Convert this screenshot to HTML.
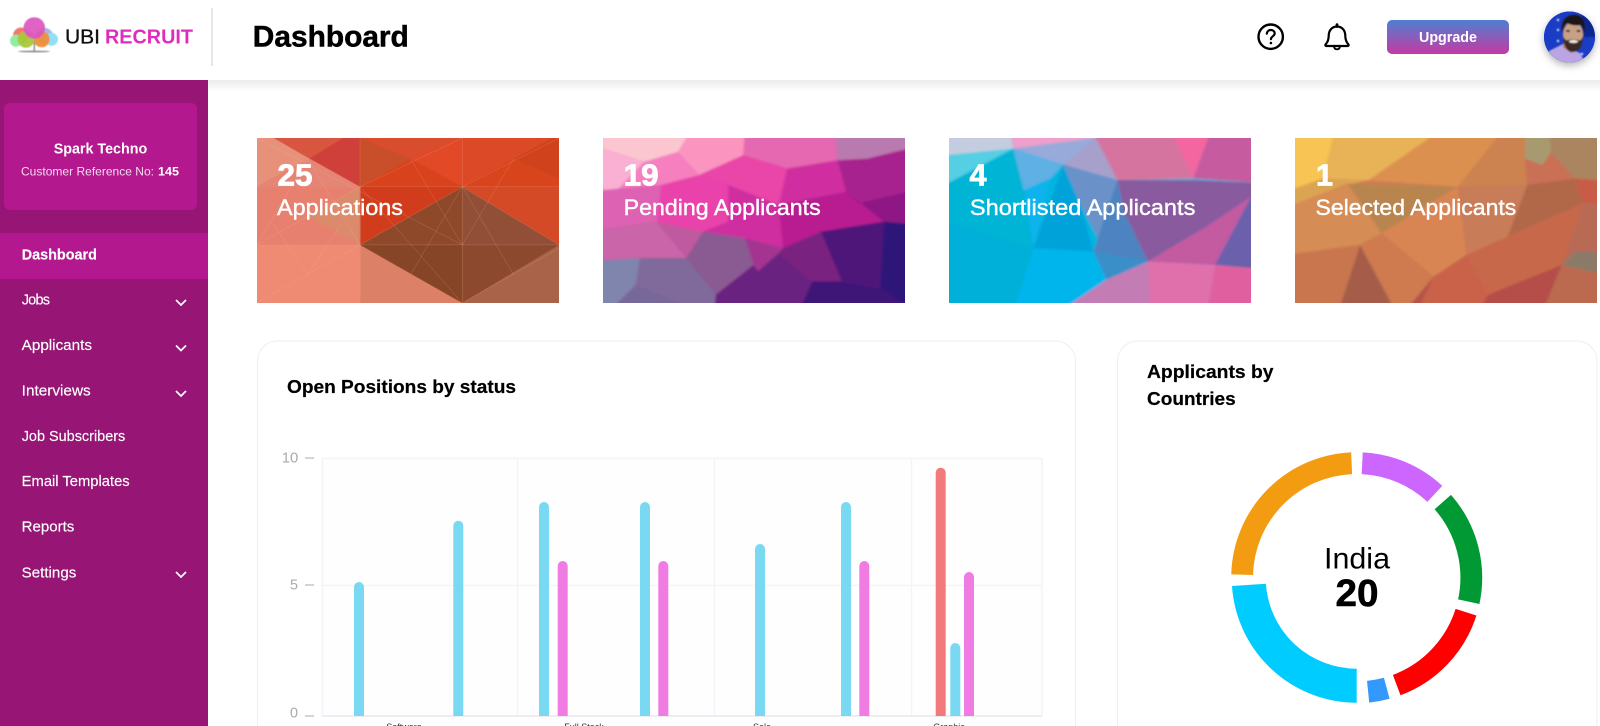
<!DOCTYPE html>
<html lang="en">
<head>
<meta charset="utf-8">
<title>Dashboard</title>
<style>
html,body{margin:0;padding:0;width:1600px;height:726px;overflow:hidden;background:#fff}
svg{display:block}
text{font-family:"Liberation Sans",sans-serif}
.m{fill:#fff;font-size:14.5px;stroke:#fff;stroke-width:.15px}
.cn{fill:#fff;font-size:31px;font-weight:700;stroke:#fff;stroke-width:.8px}
.cl{fill:#fff;font-size:22px;stroke:#fff;stroke-width:.4px}
.t{fill:#000;font-size:18px;font-weight:700;stroke:#000;stroke-width:.2px}
.y{fill:#aaa;font-size:15px}
.x{fill:#333;font-size:9px}
</style>
</head>
<body>
<svg width="1600" height="726" viewBox="0 0 1600 726" xmlns="http://www.w3.org/2000/svg">
<defs>
<linearGradient id="up" x1="0" y1="0" x2="0" y2="1"><stop offset="0" stop-color="#4f7fd0"/><stop offset="1" stop-color="#c53aa3"/></linearGradient>
<linearGradient id="hs" x1="0" y1="0" x2="0" y2="1"><stop offset="0" stop-color="#ececec"/><stop offset="1" stop-color="#fff"/></linearGradient>
<filter id="b" x="-10%" y="-10%" width="120%" height="120%"><feGaussianBlur stdDeviation=".8"/></filter>
<filter id="l" x="-10%" y="-10%" width="120%" height="120%"><feGaussianBlur stdDeviation=".45"/></filter>
<filter id="p" x="-5%" y="-5%" width="110%" height="110%"><feGaussianBlur stdDeviation="3"/></filter>
<filter id="p1" x="-5%" y="-5%" width="110%" height="110%"><feGaussianBlur stdDeviation="1"/></filter>
<filter id="s" x="-30%" y="-30%" width="160%" height="170%"><feDropShadow dx="0" dy="3" stdDeviation="4" flood-color="#000" flood-opacity=".3"/></filter>
<clipPath id="av"><circle cx="1569.5" cy="37" r="25.5"/></clipPath>
</defs>

<rect width="1600" height="726" fill="#fff"/>
<rect x="208" y="80" width="1392" height="12" fill="url(#hs)"/>

<!-- header -->
<rect x="211" y="8" width="2" height="58" fill="#e6e6e6"/>
<g filter="url(#l)">
<circle cx="21" cy="35.500" r="8" fill="#ef6a5e" opacity=".9"/>
<circle cx="45" cy="36" r="8" fill="#9fb8dd"/>
<circle cx="51.500" cy="39.300" r="6.500" fill="#8fe0f8"/>
<circle cx="16" cy="40.700" r="6" fill="#90eda0"/>
<circle cx="26" cy="39.300" r="8.500" fill="#a8c83a" opacity=".95"/>
<circle cx="41.700" cy="39.300" r="8" fill="#ee8f3a" opacity=".95"/>
<circle cx="34.300" cy="28" r="10.800" fill="#dd55bf" opacity=".93"/>
<rect x="33.600" y="42" width="1.400" height="9" fill="#8a8a8a"/>
<ellipse cx="34" cy="51.500" rx="16" ry="1" fill="#999"/>
</g>
<text x="65" y="43.300" font-size="20" fill="#111" stroke="#111" stroke-width=".3" textLength="35" lengthAdjust="spacingAndGlyphs">UBI</text>
<text x="105" y="43.300" font-size="20" font-weight="700" fill="#e02cbc" textLength="88" lengthAdjust="spacingAndGlyphs">RECRUIT</text>
<text x="252.800" y="46.300" font-size="30" font-weight="700" fill="#000" stroke="#000" stroke-width=".5" textLength="156" lengthAdjust="spacingAndGlyphs">Dashboard</text>

<circle cx="1270.700" cy="36.700" r="12.200" fill="none" stroke="#000" stroke-width="2.400"/>
<path d="M1266.800 33.600c.3-2.300 2-3.600 4-3.600 2.300 0 3.900 1.500 3.900 3.400 0 2.800-3.800 3-3.800 5.700" fill="none" stroke="#000" stroke-width="2.200" stroke-linecap="round"/>
<circle cx="1270.900" cy="43" r="1.300" fill="#000"/>
<path d="M1337 26.500c-5 0-8.300 3.900-8.300 9.300 0 4.200-1 6.400-3.100 8.700-.5.600-.2 1.500.7 1.500h21.400c.9 0 1.200-.9.7-1.500-2.100-2.300-3.100-4.500-3.100-8.700 0-5.400-3.300-9.300-8.300-9.300z" fill="none" stroke="#000" stroke-width="2.200" stroke-linejoin="round"/>
<path d="M1337 26.500v-1.800" stroke="#000" stroke-width="2.800" stroke-linecap="round"/>
<path d="M1334 46.500c.3 1.900 1.500 2.800 3 2.800s2.700-.9 3-2.800" fill="none" stroke="#000" stroke-width="1.900"/>

<rect x="1387" y="20" width="122" height="34" rx="5" fill="url(#up)"/>
<text x="1448" y="42" font-size="15" font-weight="700" fill="#fff" text-anchor="middle" textLength="58" lengthAdjust="spacingAndGlyphs">Upgrade</text>

<circle cx="1569.500" cy="37" r="25.500" fill="#1b3cc4" filter="url(#s)"/>
<g clip-path="url(#av)">
<rect x="1544" y="11" width="51" height="52" fill="#1b3cc4"/>
<g filter="url(#b)">
<rect x="1582" y="11" width="13" height="26" fill="#10288f"/>
<circle cx="1558" cy="20" r="1.200" fill="#cfe4ff"/>
<circle cx="1558" cy="30" r="1.200" fill="#cfe4ff"/>
<circle cx="1558" cy="41" r="1.200" fill="#cfe4ff"/>
<circle cx="1582" cy="54" r="1.200" fill="#cfe4ff"/>
<path d="M1546 64l3-13 14-7 9 6 8 3 6 11z" fill="#bba4e4"/>
<path d="M1564 42l-1 5 8 6 6-3 1-8z" fill="#a9795f"/>
<ellipse cx="1573" cy="35" rx="10" ry="13.500" fill="#c9a084"/>
<path d="M1562 33c-1.500-10 2-17 10.500-18 8.500-1 13 4.500 12.500 13.500l-1 4.500c-.5-3-1.500-6-3-8-5 1-10.500 0-14.500-2-1.500 3-3.500 6-4.500 10z" fill="#1e1714"/>
<path d="M1563.500 36c0 9 3 16 9.500 16s9.500-7 10-16c-1 3-2 4-3.500 4.500-4-1.500-9-1.500-12.500 0-1.500-.5-3-2-3.500-4.500z" fill="#3a2a22"/>
<ellipse cx="1573.500" cy="41.500" rx="4.500" ry="1.500" fill="#f2ece8"/>
<ellipse cx="1568" cy="31" rx="2" ry="1" fill="#231815"/>
<ellipse cx="1578.500" cy="31" rx="2" ry="1" fill="#231815"/>
</g>
</g>

<!-- sidebar -->
<rect x="0" y="80" width="208" height="646" fill="#961575"/>
<rect x="4" y="103" width="193" height="107" rx="6" fill="#b3188f"/>
<text x="53.700" y="153.300" font-size="14.500" font-weight="700" fill="#fff" textLength="93.500" lengthAdjust="spacingAndGlyphs">Spark Techno</text>
<text x="21" y="175.700" font-size="12" fill="#f3dcee" textLength="133" lengthAdjust="spacingAndGlyphs">Customer Reference No:</text>
<text x="158" y="175.700" font-size="12" font-weight="700" fill="#fff" textLength="21" lengthAdjust="spacingAndGlyphs">145</text>
<rect x="0" y="233" width="208" height="46" fill="#b3188f"/>
<text class="m" x="21.700" y="259.300" font-weight="700" textLength="75.300" lengthAdjust="spacingAndGlyphs">Dashboard</text>
<text class="m" x="21.700" y="304.300" textLength="28.300" lengthAdjust="spacing">Jobs</text>
<text class="m" x="21.700" y="350" textLength="70.300" lengthAdjust="spacingAndGlyphs">Applicants</text>
<text class="m" x="21.700" y="395.300" textLength="69" lengthAdjust="spacingAndGlyphs">Interviews</text>
<text class="m" x="21.700" y="441" textLength="103.600" lengthAdjust="spacingAndGlyphs">Job Subscribers</text>
<text class="m" x="21.700" y="486" textLength="108" lengthAdjust="spacingAndGlyphs">Email Templates</text>
<text class="m" x="21.700" y="531.700" textLength="52.600" lengthAdjust="spacingAndGlyphs">Reports</text>
<text class="m" x="21.700" y="577.300" textLength="54.600" lengthAdjust="spacingAndGlyphs">Settings</text>
<g fill="none" stroke="#fff" stroke-width="1.700">
<path d="M176 300l5 5 5-5"/><path d="M176 345.500l5 5 5-5"/><path d="M176 391l5 5 5-5"/><path d="M176 572l5 5 5-5"/>
</g>

<!-- card 1 -->
<svg x="257" y="138" width="302" height="165" viewBox="40 38 718 497" preserveAspectRatio="none">
<rect x="40" y="38" width="718" height="497" fill="#d9472a"/>
<g filter="url(#p1)">
<polygon points="0,0 80,0 80,38 165,100 40,185 0,185" fill="#e8917a"/>
<polygon points="80,0 245,0 245,38 165,100 80,38" fill="#d8553f"/>
<polygon points="245,0 285,0 285,185 165,100 245,38" fill="#cf3f3a"/>
<polygon points="40,185 165,100 285,185" fill="#e58576"/>
<polygon points="0,185 285,185 285,360 0,360" fill="#e8806f"/>
<polygon points="285,185 285,360 160,275" fill="#dc8a6c"/>
<polygon points="0,360 285,360 285,580 0,580" fill="#ef8a73"/>
<polygon points="285,360 528,535 528,580 285,580" fill="#dc8068"/>
<polygon points="285,0 528,0 528,38 405,100 285,185" fill="#c94f2a"/>
<polygon points="285,0 528,0 528,38 405,100 285,38" fill="#d94d2e"/>
<polygon points="405,100 528,38 528,185" fill="#e24a28"/>
<polygon points="285,185 405,100 528,185" fill="#d8431f"/>
<polygon points="285,185 528,185 285,360" fill="#d13c1c"/>
<polygon points="528,0 800,0 800,38 650,100 528,185" fill="#dc4a28"/>
<polygon points="650,100 800,0 800,185 758,185" fill="#d0431f"/>
<polygon points="528,185 650,100 800,185" fill="#d8451f"/>
<polygon points="528,185 800,185 800,360 758,360" fill="#d44a25"/>
<polygon points="758,360 800,360 800,580 528,580 528,535" fill="#a9634a"/>
<polygon points="528,185 285,360 528,360" fill="#8e4a2c"/>
<polygon points="528,185 528,360 758,360" fill="#915038"/>
<polygon points="285,360 528,360 528,535" fill="#864528"/>
<polygon points="528,360 758,360 528,535" fill="#8d4a2e"/>
</g>
<g fill="none" stroke="#f4c0a0" stroke-width="1" opacity=".42">
<path d="M285 38V535M528 38V535M40 185H758M40 360H758M40 38L528 360M285 185L528 535M40 360L285 185 528 38M285 360L528 185 758 38M528 185L758 360M528 535L758 370M40 535L285 360M160 100L40 360M160 100L285 360M160 450L80 300M160 450L240 300M405 100L528 360M650 100L528 360M405 450L528 185M650 450L528 185"/>
</g>
</svg>

<!-- card 2 -->
<svg x="603" y="138" width="302" height="165" viewBox="862 38 718 497" preserveAspectRatio="none">
<rect x="862" y="38" width="718" height="497" fill="#b5308f"/>
<g filter="url(#p)">
<rect x="820" y="0" width="800" height="580" fill="#b5308f"/>
<polygon points="820,0 1060,0 1060,38 1040,80 960,110 862,70 820,70" fill="#fcc6d0"/>
<polygon points="820,70 862,70 960,110 900,190 870,200 820,200" fill="#f9b0d2"/>
<polygon points="1060,0 1200,0 1200,38 1195,90 1090,150 1040,80 1060,38" fill="#fb95c0"/>
<polygon points="960,110 1040,80 1090,150 1000,180 900,190" fill="#f67fc0"/>
<polygon points="1200,0 1410,0 1420,105 1300,130 1195,90" fill="#e668b0"/>
<polygon points="1410,0 1620,0 1620,60 1490,100 1420,105" fill="#b97ab0"/>
<polygon points="1195,90 1300,130 1280,240 1160,180 1090,150" fill="#ea45a8"/>
<polygon points="1300,130 1420,105 1440,200 1280,240" fill="#d02fa0"/>
<polygon points="1420,105 1490,100 1620,60 1620,190 1470,235 1440,200" fill="#a8248f"/>
<polygon points="820,200 900,190 1000,180 990,290 820,320" fill="#de62b4"/>
<polygon points="1000,180 1090,150 1160,180 1160,290 1100,320 990,290" fill="#ea42ab"/>
<polygon points="1160,180 1280,240 1290,370 1200,340 1100,320 1160,290" fill="#cf2ea0"/>
<polygon points="1280,240 1440,200 1530,290 1380,320 1290,370" fill="#b81a90"/>
<polygon points="1440,200 1470,235 1620,190 1620,300 1530,290" fill="#8f1585"/>
<polygon points="820,320 990,290 1060,400 950,400 820,410" fill="#c965a8"/>
<polygon points="990,290 1100,320 1060,400" fill="#c05aa0"/>
<polygon points="1100,320 1200,340 1220,420 1130,510 1060,400" fill="#8a5a92"/>
<polygon points="1200,340 1290,370 1280,385 1230,440 1220,420" fill="#a33590"/>
<polygon points="1290,370 1380,320 1430,470 1360,470 1280,385" fill="#7a2080"/>
<polygon points="1380,320 1530,290 1520,490 1430,470" fill="#50147a"/>
<polygon points="1530,290 1620,300 1620,580 1520,490" fill="#2f1278"/>
<polygon points="820,410 950,400 940,480 862,580 820,580" fill="#7f85ad"/>
<polygon points="950,400 1060,400 1130,510 1125,580 940,480" fill="#806a9b"/>
<polygon points="862,580 940,480 1125,580" fill="#77689a"/>
<polygon points="1130,510 1220,420 1230,440 1280,385 1360,470 1320,580 1125,580" fill="#6a2080"/>
<polygon points="1360,470 1430,470 1520,490 1620,580 1320,580" fill="#3c1278"/>
</g>
</svg>

<!-- card 3 -->
<svg x="949" y="138" width="302" height="165" viewBox="67 38 696 497" preserveAspectRatio="none">
<rect x="67" y="38" width="696" height="497" fill="#00b5e0"/>
<g filter="url(#p)">
<rect x="20" y="0" width="790" height="580" fill="#00b5e0"/>
<polygon points="20,0 205,0 215,70 20,95" fill="#c4cde0"/>
<polygon points="205,0 405,0 405,38 215,70" fill="#ee9fcc"/>
<polygon points="405,38 330,118 215,70" fill="#98aada"/>
<polygon points="20,95 215,70 20,205" fill="#55cfe3"/>
<polygon points="20,205 215,70 240,195 262,370 20,270" fill="#06b4d6"/>
<polygon points="215,70 330,118 300,160 240,195" fill="#5fb0e4"/>
<polygon points="240,195 300,160 262,370" fill="#0db3ec"/>
<polygon points="330,118 262,370 400,380 370,240" fill="#03a2da"/>
<polygon points="330,118 405,38 455,165" fill="#a7a0cc"/>
<polygon points="405,0 570,0 630,160 455,165 405,38" fill="#d5759f"/>
<polygon points="570,0 675,0 630,160" fill="#f466a0"/>
<polygon points="675,0 810,0 810,175 630,160" fill="#c65c9f"/>
<polygon points="330,118 455,165 410,340 370,240" fill="#6a92c9"/>
<polygon points="455,165 630,165 810,175 810,215 763,215 660,305 525,410 470,260" fill="#8a5a9e"/>
<polygon points="455,165 470,260 525,410 400,380 410,340" fill="#4e83c0"/>
<polygon points="763,215 810,215 810,435 680,420" fill="#6b60ab"/>
<polygon points="660,305 763,215 680,420 525,410" fill="#c45aa0"/>
<polygon points="20,270 262,370 210,580 20,580" fill="#02b0d8"/>
<polygon points="262,370 400,380 430,465 300,580 210,580" fill="#06b5ec"/>
<polygon points="400,380 525,410 430,465" fill="#3b8fc9"/>
<polygon points="430,465 525,410 530,580 300,580" fill="#c47bb5"/>
<polygon points="525,410 680,420 660,580 530,580" fill="#e070ac"/>
<polygon points="680,420 810,435 810,580 660,580" fill="#e0609f"/>
</g>
</svg>

<!-- card 4 -->
<svg x="1295" y="138" width="302" height="165" viewBox="865 38 696 497" preserveAspectRatio="none">
<rect x="865" y="38" width="696" height="497" fill="#cf7d55"/>
<g filter="url(#p)">
<rect x="820" y="0" width="790" height="580" fill="#cf7d55"/>
<polygon points="820,0 960,0 930,160 820,210" fill="#f8c452"/>
<polygon points="960,0 1175,0 1175,38 1035,165 930,160" fill="#e8b256"/>
<polygon points="930,160 1035,165 985,180 820,260 820,210" fill="#dba452"/>
<polygon points="1175,0 1330,0 1330,38 1240,185 1035,165 1175,38" fill="#dc9050"/>
<polygon points="1330,0 1395,0 1400,180 1240,185 1330,38" fill="#cc8350"/>
<polygon points="1395,0 1450,0 1455,80 1435,120 1395,100" fill="#a89a70"/>
<polygon points="1450,0 1610,0 1610,170 1510,160 1455,80" fill="#ab8560"/>
<polygon points="1395,100 1435,120 1455,80 1510,160 1400,180" fill="#c96f55"/>
<polygon points="1510,160 1610,170 1610,240 1530,235" fill="#c95b47"/>
<polygon points="1400,180 1510,160 1530,235 1355,335" fill="#b0674a"/>
<polygon points="985,175 1240,185 1065,325" fill="#b98550"/>
<polygon points="820,260 985,175 1065,325 1015,360 820,395" fill="#d58c55"/>
<polygon points="1065,325 1240,185 1260,390 1185,455" fill="#d98552"/>
<polygon points="1240,185 1400,180 1355,335 1260,390" fill="#c97b58"/>
<polygon points="1355,335 1530,235 1480,420 1310,510 1260,390" fill="#c8684b"/>
<polygon points="1530,235 1610,240 1610,380 1510,380 1480,420" fill="#b86a55"/>
<polygon points="1480,420 1510,380 1610,380 1610,460" fill="#8c7a68"/>
<polygon points="820,395 1015,360 960,580 820,580" fill="#c97650"/>
<polygon points="1015,360 1105,580 960,580" fill="#a55d4a"/>
<polygon points="1015,360 1065,325 1185,455 1105,580" fill="#cf7a50"/>
<polygon points="1185,455 1260,390 1310,510 1280,580 1140,580" fill="#c9624a"/>
<polygon points="1185,455 1140,580 1105,580" fill="#b55248"/>
<polygon points="1310,510 1480,420 1430,580 1280,580" fill="#b54d4a"/>
<polygon points="1480,420 1610,460 1610,580 1430,580" fill="#bc6a4f"/>
</g>
</svg>

<!-- card text -->
<text class="cn" x="277.500" y="185.700" textLength="35" lengthAdjust="spacingAndGlyphs">25</text>
<text class="cl" x="277" y="215" textLength="126" lengthAdjust="spacingAndGlyphs">Applications</text>
<text class="cn" x="623.700" y="185.700" textLength="35" lengthAdjust="spacingAndGlyphs">19</text>
<text class="cl" x="623.700" y="215" textLength="197" lengthAdjust="spacingAndGlyphs">Pending Applicants</text>
<text class="cn" x="969.500" y="185.700" textLength="17" lengthAdjust="spacingAndGlyphs">4</text>
<text class="cl" x="969.900" y="215" textLength="225.500" lengthAdjust="spacingAndGlyphs">Shortlisted Applicants</text>
<text class="cn" x="1316" y="185.700" textLength="17" lengthAdjust="spacingAndGlyphs">1</text>
<text class="cl" x="1315.500" y="215" textLength="200.800" lengthAdjust="spacingAndGlyphs">Selected Applicants</text>

<!-- panels -->
<path d="M257.500 726V361a20 20 0 0 1 20-20H1055.500a20 20 0 0 1 20 20V726" fill="#fff" stroke="#eceef1"/>
<path d="M1117.500 726V361a20 20 0 0 1 20-20H1577a20 20 0 0 1 20 20V726" fill="#fff" stroke="#eceef1"/>
<text class="t" x="287" y="393" textLength="229" lengthAdjust="spacingAndGlyphs">Open Positions by status</text>
<text class="t" x="1147" y="378" textLength="126.500" lengthAdjust="spacingAndGlyphs">Applicants by</text>
<text class="t" x="1147" y="405" textLength="88.700" lengthAdjust="spacingAndGlyphs">Countries</text>

<!-- bar chart -->
<rect x="322" y="458" width="720" height="258" fill="#fefefe"/>
<g stroke="#f3f4f9" stroke-width="1.500" fill="none">
<path d="M322 458.500H1042M322 585.500H1042M322.500 458V716M517.500 458V716M714.500 458V716M911.500 458V716M1042 458V716"/>
</g>
<path d="M322 716H1042" stroke="#e8e9ee" stroke-width="1.500"/>
<path d="M305 458h9M305 585h9M305 716h9" stroke="#bbb" stroke-width="1.300"/>
<text class="y" x="281.700" y="462.500" textLength="16.600" lengthAdjust="spacingAndGlyphs">10</text>
<text class="y" x="290" y="589.500" textLength="8" lengthAdjust="spacingAndGlyphs">5</text>
<text class="y" x="290" y="717.500" textLength="8" lengthAdjust="spacingAndGlyphs">0</text>
<g fill="#7ad9f2">
<path d="M354 716V587a5 5 0 0 1 10 0V716z"/>
<path d="M453.300 716V525.700a5 5 0 0 1 10 0V716z"/>
<path d="M539 716V507a5 5 0 0 1 10 0V716z"/>
<path d="M640 716V507a5 5 0 0 1 10 0V716z"/>
<path d="M755 716V549a5 5 0 0 1 10 0V716z"/>
<path d="M841 716V507a5 5 0 0 1 10 0V716z"/>
<path d="M950.300 716V648a5 5 0 0 1 10 0V716z"/>
</g>
<g fill="#f07ce3">
<path d="M557.700 716V566a5 5 0 0 1 10 0V716z"/>
<path d="M658.300 716V566a5 5 0 0 1 10 0V716z"/>
<path d="M859.300 716V566a5 5 0 0 1 10 0V716z"/>
<path d="M964 716V577a5 5 0 0 1 10 0V716z"/>
</g>
<path d="M935.700 716V472.700a5 5 0 0 1 10 0V716z" fill="#f27a7a"/>
<text class="x" x="404" y="730" text-anchor="middle">Software</text>
<text class="x" x="584" y="730" text-anchor="middle">Full Stack</text>
<text class="x" x="762" y="730" text-anchor="middle">Sale</text>
<text class="x" x="949" y="730" text-anchor="middle">Graphic</text>

<!-- donut -->
<g fill="none">
<circle cx="1356.700" cy="577.700" r="114.600" stroke="#cc66ff" stroke-width="21.800" pathLength="360" stroke-dasharray="40.250 360" transform="rotate(-87.250 1356.700 577.700)"/>
<circle cx="1356.700" cy="577.700" r="114.600" stroke="#009933" stroke-width="21.800" pathLength="360" stroke-dasharray="53.400 360" transform="rotate(-41.300 1356.700 577.700)"/>
<circle cx="1356.700" cy="577.700" r="114.600" stroke="#ff0000" stroke-width="21.800" pathLength="360" stroke-dasharray="52.100 360" transform="rotate(17.500 1356.700 577.700)"/>
<circle cx="1356.700" cy="577.700" r="114.600" stroke="#3399ff" stroke-width="21.800" pathLength="360" stroke-dasharray="9.500 360" transform="rotate(74.800 1356.700 577.700)"/>
<circle cx="1356.700" cy="577.700" r="108" stroke="#00ccff" stroke-width="34" pathLength="360" stroke-dasharray="86.200 360" transform="rotate(90 1356.700 577.700)"/>
<circle cx="1356.700" cy="577.700" r="114.600" stroke="#f39c12" stroke-width="21.800" pathLength="360" stroke-dasharray="86 360" transform="rotate(181.500 1356.700 577.700)"/>
</g>
<text x="1357" y="568.500" font-size="30" fill="#000" text-anchor="middle" textLength="66" lengthAdjust="spacingAndGlyphs">India</text>
<text x="1357" y="606" font-size="38" font-weight="700" fill="#000" stroke="#000" stroke-width=".6" text-anchor="middle" textLength="43" lengthAdjust="spacingAndGlyphs">20</text>
</svg>
</body>
</html>
